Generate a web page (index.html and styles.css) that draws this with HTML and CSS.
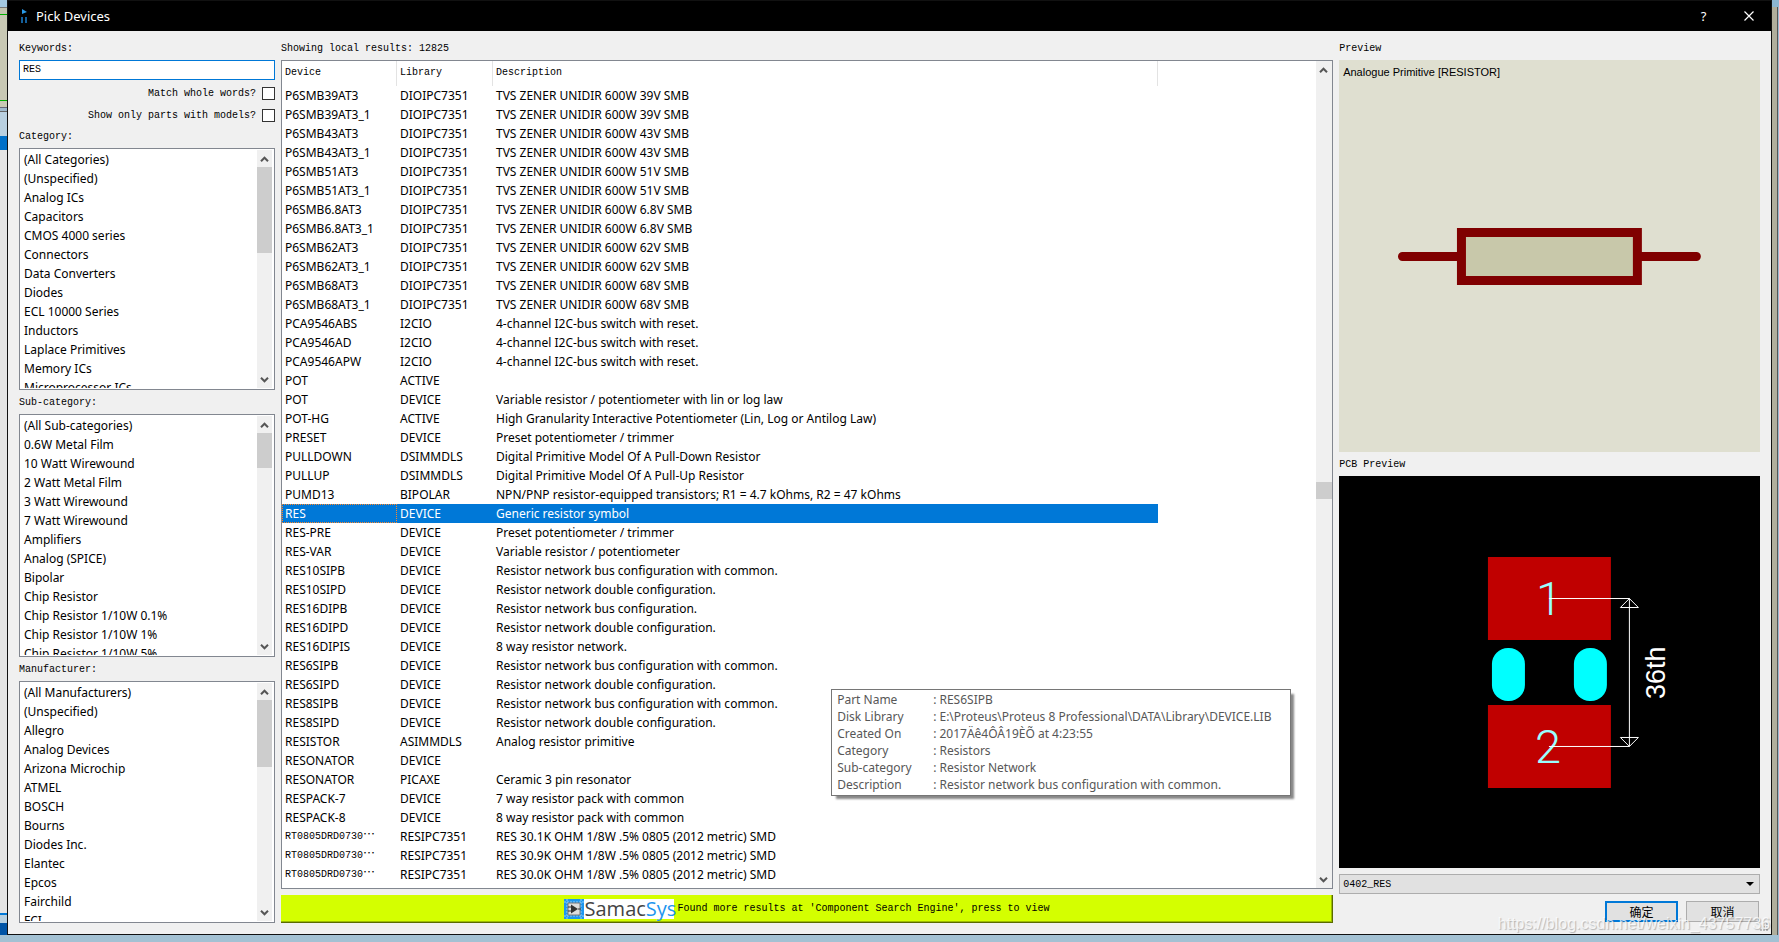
FILE: index.html
```html
<!DOCTYPE html>
<html lang="en">
<head>
<meta charset="utf-8">
<title>Pick Devices</title>
<link rel="stylesheet" href="styles.css">
</head>
<body>
<svg class="defs" aria-hidden="true">
  <symbol id="up" viewBox="0 0 9 6"><path d="M1 5.2 4.5 1.7 8 5.2" fill="none" stroke="#555" stroke-width="2"/></symbol>
  <symbol id="down" viewBox="0 0 9 6"><path d="M1 .8 4.5 4.3 8 .8" fill="none" stroke="#555" stroke-width="2"/></symbol>
</svg>
<div class="desktop">
  <div class="edge edge-left"></div>
  <main class="window">
    <header class="titlebar">
      <svg class="app-icon" viewBox="0 0 8 14"><path d="M2 0 7 3 2 5z" fill="#2a9be8"/><path d="M1 8h2v6H1zM5 8h2v6H5z" fill="#14609c"/></svg>
      <h1 class="title">Pick Devices</h1>
      <button class="title-btn" aria-label="Help">?</button>
      <button class="title-btn" aria-label="Close"><svg class="close-icon" viewBox="0 0 10 10"><path d="M.5.5l9 9M9.500.5l-9 9" stroke="#fff" stroke-width="1.2"/></svg></button>
    </header>
    <div class="content">
      <section class="filters">
        <label class="label" for="kw">Keywords:</label>
        <input class="keywords" id="kw" type="text" value="RES">
        <div class="checks">
          <label class="check">Match whole words?<input type="checkbox"></label>
          <label class="check">Show only parts with models?<input type="checkbox"></label>
        </div>
        <label class="label" for="cat">Category:</label>
        <div class="listbox">
          <select id="cat" size="12">
            <option>(All Categories)</option><option>(Unspecified)</option><option>Analog ICs</option><option>Capacitors</option><option>CMOS 4000 series</option><option>Connectors</option><option>Data Converters</option><option>Diodes</option><option>ECL 10000 Series</option><option>Inductors</option><option>Laplace Primitives</option><option>Memory ICs</option><option>Microprocessor ICs</option>
          </select>
          <div class="scroll"><svg class="arrow"><use href="#up"/></svg><div class="track"><div class="thumb" style="height:42%"></div></div><svg class="arrow"><use href="#down"/></svg></div>
        </div>
        <label class="label" for="sub">Sub-category:</label>
        <div class="listbox">
          <select id="sub" size="12">
            <option>(All Sub-categories)</option><option>0.6W Metal Film</option><option>10 Watt Wirewound</option><option>2 Watt Metal Film</option><option>3 Watt Wirewound</option><option>7 Watt Wirewound</option><option>Amplifiers</option><option>Analog (SPICE)</option><option>Bipolar</option><option>Chip Resistor</option><option>Chip Resistor 1/10W 0.1%</option><option>Chip Resistor 1/10W 1%</option><option>Chip Resistor 1/10W 5%</option>
          </select>
          <div class="scroll"><svg class="arrow"><use href="#up"/></svg><div class="track"><div class="thumb" style="height:17%"></div></div><svg class="arrow"><use href="#down"/></svg></div>
        </div>
        <label class="label" for="man">Manufacturer:</label>
        <div class="listbox">
          <select id="man" size="12">
            <option>(All Manufacturers)</option><option>(Unspecified)</option><option>Allegro</option><option>Analog Devices</option><option>Arizona Microchip</option><option>ATMEL</option><option>BOSCH</option><option>Bourns</option><option>Diodes Inc.</option><option>Elantec</option><option>Epcos</option><option>Fairchild</option><option>FCI</option>
          </select>
          <div class="scroll"><svg class="arrow"><use href="#up"/></svg><div class="track"><div class="thumb" style="height:33%"></div></div><svg class="arrow"><use href="#down"/></svg></div>
        </div>
      </section>

      <section class="results">
        <div class="label">Showing local results: 12825</div>
        <div class="listview">
          <div class="rows">
            <table>
              <colgroup><col class="c-device"><col class="c-library"><col class="c-desc"></colgroup>
              <thead><tr><th>Device</th><th>Library</th><th>Description</th></tr></thead>
              <tbody>
                <tr><td>P6SMB39AT3</td><td>DIOIPC7351</td><td>TVS ZENER UNIDIR 600W 39V SMB</td></tr>
                <tr><td>P6SMB39AT3_1</td><td>DIOIPC7351</td><td>TVS ZENER UNIDIR 600W 39V SMB</td></tr>
                <tr><td>P6SMB43AT3</td><td>DIOIPC7351</td><td>TVS ZENER UNIDIR 600W 43V SMB</td></tr>
                <tr><td>P6SMB43AT3_1</td><td>DIOIPC7351</td><td>TVS ZENER UNIDIR 600W 43V SMB</td></tr>
                <tr><td>P6SMB51AT3</td><td>DIOIPC7351</td><td>TVS ZENER UNIDIR 600W 51V SMB</td></tr>
                <tr><td>P6SMB51AT3_1</td><td>DIOIPC7351</td><td>TVS ZENER UNIDIR 600W 51V SMB</td></tr>
                <tr><td>P6SMB6.8AT3</td><td>DIOIPC7351</td><td>TVS ZENER UNIDIR 600W 6.8V SMB</td></tr>
                <tr><td>P6SMB6.8AT3_1</td><td>DIOIPC7351</td><td>TVS ZENER UNIDIR 600W 6.8V SMB</td></tr>
                <tr><td>P6SMB62AT3</td><td>DIOIPC7351</td><td>TVS ZENER UNIDIR 600W 62V SMB</td></tr>
                <tr><td>P6SMB62AT3_1</td><td>DIOIPC7351</td><td>TVS ZENER UNIDIR 600W 62V SMB</td></tr>
                <tr><td>P6SMB68AT3</td><td>DIOIPC7351</td><td>TVS ZENER UNIDIR 600W 68V SMB</td></tr>
                <tr><td>P6SMB68AT3_1</td><td>DIOIPC7351</td><td>TVS ZENER UNIDIR 600W 68V SMB</td></tr>
                <tr><td>PCA9546ABS</td><td>I2CIO</td><td>4-channel I2C-bus switch with reset.</td></tr>
                <tr><td>PCA9546AD</td><td>I2CIO</td><td>4-channel I2C-bus switch with reset.</td></tr>
                <tr><td>PCA9546APW</td><td>I2CIO</td><td>4-channel I2C-bus switch with reset.</td></tr>
                <tr><td>POT</td><td>ACTIVE</td><td></td></tr>
                <tr><td>POT</td><td>DEVICE</td><td>Variable resistor / potentiometer with lin or log law</td></tr>
                <tr><td>POT-HG</td><td>ACTIVE</td><td>High Granularity Interactive Potentiometer (Lin, Log or Antilog Law)</td></tr>
                <tr><td>PRESET</td><td>DEVICE</td><td>Preset potentiometer / trimmer</td></tr>
                <tr><td>PULLDOWN</td><td>DSIMMDLS</td><td>Digital Primitive Model Of A Pull-Down Resistor</td></tr>
                <tr><td>PULLUP</td><td>DSIMMDLS</td><td>Digital Primitive Model Of A Pull-Up Resistor</td></tr>
                <tr><td>PUMD13</td><td>BIPOLAR</td><td>NPN/PNP resistor-equipped transistors; R1 = 4.7 kOhms, R2 = 47 kOhms</td></tr>
                <tr class="selected"><td>RES</td><td>DEVICE</td><td>Generic resistor symbol</td></tr>
                <tr><td>RES-PRE</td><td>DEVICE</td><td>Preset potentiometer / trimmer</td></tr>
                <tr><td>RES-VAR</td><td>DEVICE</td><td>Variable resistor / potentiometer</td></tr>
                <tr><td>RES10SIPB</td><td>DEVICE</td><td>Resistor network bus configuration with common.</td></tr>
                <tr><td>RES10SIPD</td><td>DEVICE</td><td>Resistor network double configuration.</td></tr>
                <tr><td>RES16DIPB</td><td>DEVICE</td><td>Resistor network bus configuration.</td></tr>
                <tr><td>RES16DIPD</td><td>DEVICE</td><td>Resistor network double configuration.</td></tr>
                <tr><td>RES16DIPIS</td><td>DEVICE</td><td>8 way resistor network.</td></tr>
                <tr><td>RES6SIPB</td><td>DEVICE</td><td>Resistor network bus configuration with common.</td></tr>
                <tr><td>RES6SIPD</td><td>DEVICE</td><td>Resistor network double configuration.</td></tr>
                <tr><td>RES8SIPB</td><td>DEVICE</td><td>Resistor network bus configuration with common.</td></tr>
                <tr><td>RES8SIPD</td><td>DEVICE</td><td>Resistor network double configuration.</td></tr>
                <tr><td>RESISTOR</td><td>ASIMMDLS</td><td>Analog resistor primitive</td></tr>
                <tr><td>RESONATOR</td><td>DEVICE</td><td></td></tr>
                <tr><td>RESONATOR</td><td>PICAXE</td><td>Ceramic 3 pin resonator</td></tr>
                <tr><td>RESPACK-7</td><td>DEVICE</td><td>7 way resistor pack with common</td></tr>
                <tr><td>RESPACK-8</td><td>DEVICE</td><td>8 way resistor pack with common</td></tr>
                <tr><td class="mono">RT0805DRD0730<span class="more" lang="zh-CN">…</span></td><td>RESIPC7351</td><td>RES 30.1K OHM 1/8W .5% 0805 (2012 metric) SMD</td></tr>
                <tr><td class="mono">RT0805DRD0730<span class="more" lang="zh-CN">…</span></td><td>RESIPC7351</td><td>RES 30.9K OHM 1/8W .5% 0805 (2012 metric) SMD</td></tr>
                <tr><td class="mono">RT0805DRD0730<span class="more" lang="zh-CN">…</span></td><td>RESIPC7351</td><td>RES 30.0K OHM 1/8W .5% 0805 (2012 metric) SMD</td></tr>
              </tbody>
            </table>
          </div>
          <div class="scroll"><svg class="arrow"><use href="#up"/></svg><div class="track"><div class="before" style="height:51%"></div><div class="thumb thumb-min"></div></div><svg class="arrow"><use href="#down"/></svg></div>
          <dl class="tooltip" role="tooltip">
            <dt>Part Name</dt><dd>: RES6SIPB</dd>
            <dt>Disk Library</dt><dd>: E:\Proteus\Proteus 8 Professional\DATA\Library\DEVICE.LIB</dd>
            <dt>Created On</dt><dd>: 2017Äê4ÔÂ19ÈÕ at 4:23:55</dd>
            <dt>Category</dt><dd>: Resistors</dd>
            <dt>Sub-category</dt><dd>: Resistor Network</dd>
            <dt>Description</dt><dd>: Resistor network bus configuration with common.</dd>
          </dl>
        </div>
        <button class="search-more">
          <span class="brand">
            <svg class="brand-icon" viewBox="0 0 20 20"><path d="M0 0h20v20H0z" fill="#1e96ee"/><path d="M0 3h20M0 17h20M3 0v20M17 0v20" stroke="#8fcbf7" stroke-dasharray="2 1"/><path d="M4 4h12v12H4z" fill="#ddd" stroke="#777"/><path d="M7 5.500 14 10l-7 4.500z" fill="#333"/><path d="M4 8h3M4 12h3M14 10h3" stroke="#333"/></svg>
            <span class="brand-name">Samac<span class="brand-sys">Sys</span></span>
          </span>
          <span>Found more results at 'Component Search Engine', press to view</span>
        </button>
      </section>

      <section class="previews">
        <div class="label">Preview</div>
        <div class="schematic">
          <p class="model">Analogue Primitive [RESISTOR]</p>
          <svg class="drawing" viewBox="0 0 421 392" role="img" aria-label="Resistor symbol">
            <path d="M63.500 196.500H120M301 196.500h56.500" stroke="#800000" stroke-width="9" stroke-linecap="round"/>
            <path d="M118 168h185v57H118z" fill="#800000"/><path d="M127 177h167v39H127z" fill="#c8c8aa"/>
          </svg>
        </div>
        <div class="label">PCB Preview</div>
        <div class="board">
          <svg class="drawing" viewBox="0 0 421 392" role="img" aria-label="0402 footprint">
            <path d="M149 81h123v83H149zM149 229h123v83H149z" fill="#c00000"/>
            <rect x="153" y="172" width="33" height="53" rx="16" fill="#0ff"/><rect x="235" y="172" width="33" height="53" rx="16" fill="#0ff"/>
            <text class="pad-no" x="210" y="139">1</text><text class="pad-no" x="209" y="287">2</text>
            <path d="M210 122.500h80.500v148H210M281.500 131.500h18l-9-9zM281.500 261.500h18l-9 9z" fill="none" stroke="#fff"/>
            <text class="dim" transform="translate(326 223) rotate(-90)">36th</text>
          </svg>
        </div>
        <div class="package">
          <select aria-label="Package"><option>0402_RES</option></select>
          <svg class="caret" viewBox="0 0 8 4"><path d="M0 0h8L4 4z"/></svg>
        </div>
        <div class="actions"><button class="btn btn-ok">确定</button><button class="btn">取消</button></div>
      </section>
    </div>
    <svg class="grip" viewBox="0 0 9 9"><path d="M6 0h2v2H6zM3 3h2v2H3zM6 3h2v2H6zM0 6h2v2H0zM3 6h2v2H3zM6 6h2v2H6z" fill="#bbb"/></svg>
  </main>
  <div class="edge edge-right"></div>
</div>
<div class="watermark">https://blog.csdn.net/weixin_43757736</div>
</body>
</html>
```
FILE: styles.css
```css
* { box-sizing: border-box; }
body { margin: 0; height: 100vh; position: relative; overflow: hidden; background: linear-gradient(#8fadbf, #a3c1d3); font: 10px/20px "Liberation Mono", "Noto Sans CJK SC", monospace; color: #000; }
button, input, select { font: inherit; color: inherit; }
.defs { display: none; }
.desktop { display: flex; height: 100%; padding-bottom: 7px; }
.edge { width: 7px; }
.edge-left { background: linear-gradient(#a4c8e0 0 7px, #777 7px 8px, #c4c4b0 8px 14px, #00b000 14px 15px, #c8c8b4 15px 100px, #00b000 100px 101px, #c8c8b4 101px 107px, #667 107px 108px, #9fb9cc 108px 111px, #666 111px 112px, #b9d0e0 112px 136px, #0070c8 136px 150px, #e4e4e4 150px 913px, #0078d7 913px 915px, #b5cfe0 915px 923px, #0054a6 923px); }
.edge-right { background: linear-gradient(90deg, #b0ae9c 0 5px, #555 5px 6px, #9abad0 6px); border-top: 7px solid #8cb6d2; }
.window { flex: 1; min-width: 0; position: relative; display: flex; flex-direction: column; background: #f0f0f0; border: 1px solid #111; }
.titlebar { height: 30px; display: flex; align-items: center; background: #000; color: #fff; font-family: "Noto Sans", "Noto Sans CJK SC", sans-serif; padding-left: 12px; }
.app-icon { width: 8px; height: 14px; }
.title { flex: 1; margin: 0 0 0 8px; font-size: 13px; font-weight: 400; }
.title-btn { width: 45px; height: 30px; padding: 0; border: 0; background: none; font-size: 13px; }
.close-icon { width: 10px; height: 10px; }
.content { flex: 1; min-height: 0; display: grid; grid-template-columns: 256px minmax(0, 5fr) minmax(0, 2fr); gap: 6px; padding: 5px 11px 11px; }
.filters, .results, .previews { display: flex; flex-direction: column; min-height: 0; min-width: 0; }
.label { height: 24px; line-height: 26px; flex: none; }
.keywords { height: 20px; border: 1px solid #0078d7; background: #fff; padding: 0 3px; outline: 0; width: 100%; }
.checks { height: 44px; flex: none; display: flex; flex-direction: column; gap: 9px; padding-top: 7px; }
.check { height: 13px; display: flex; align-items: center; justify-content: flex-end; gap: 6px; }
.check input { appearance: none; width: 13px; height: 13px; margin: 0; border: 1px solid #333; background: #fff; }
.listbox { flex: 1; min-height: 0; display: flex; border: 1px solid #828790; background: #fff; padding: 1px 2px 1px 0; font: 12px/19px "Noto Sans", "Noto Sans CJK SC", sans-serif; }
.listbox select { flex: 1; min-width: 0; height: 100%; border: 0; border-radius: 0; padding: 1px 0 0; outline: 0; background: #fff; scrollbar-width: none; }
.listbox option { height: 19px; min-height: 19px; padding: 0 4px; line-height: 19px; }
.scroll { width: 15px; flex: none; display: flex; flex-direction: column; background: #f0f0f0; }
.arrow { width: 9px; height: 6px; margin: 6px 3px 5px; flex: none; }
.track { flex: 1; min-height: 0; }
.thumb { background: #cdcdcd; }
.thumb-min { height: 17px; }
.listview { flex: 1; min-height: 0; display: flex; position: relative; border: 1px solid #828790; background: #fff; }
.listview .scroll { width: 16px; }
.rows { flex: 1; min-width: 0; overflow: hidden; font: 12px/19px "Noto Sans", "Noto Sans CJK SC", sans-serif; }
table { border-collapse: separate; border-spacing: 0; table-layout: fixed; width: 876px; }
.c-device { width: 115px; }
.c-library { width: 96px; }
th { height: 25px; padding: 0 3px 2px; border-right: 1px solid #e3e3e3; text-align: left; font: 10px/20px "Liberation Mono", monospace; }
td { height: 19px; padding: 0 3px; white-space: nowrap; }
.mono { font-family: "Liberation Mono", monospace; font-size: 10px; }
.more { font: 12px/12px "Noto Sans CJK SC", sans-serif; }
.selected { background: #0078d7; color: #fff; }
.selected td:first-child { outline: 1px dotted #ff8728; outline-offset: -1px; }
.tooltip { position: absolute; right: 41px; bottom: 92px; min-width: 460px; margin: 0; display: grid; grid-template-columns: 96px auto; border: 1px solid #767676; background: #fff; color: #575757; padding: 1px 5px 2px; box-shadow: 4px 4px 2px -1px #888; font: 12px/17px "Noto Sans", "Noto Sans CJK SC", sans-serif; white-space: nowrap; }
.tooltip dd { margin: 0; }
.search-more { height: 28px; margin-top: 6px; flex: none; display: flex; align-items: center; justify-content: center; gap: 4px; padding: 0; border: 0; border-right: 1px solid #5a6b00; border-bottom: 1px solid #5a6b00; background: #d4ff00; box-shadow: inset -1px -1px #9cbc00; white-space: nowrap; }
.brand { display: flex; align-items: center; gap: 1px; height: 20px; width: 110px; background: #fff; }
.brand-icon { width: 20px; height: 20px; flex: none; }
.brand-name { font: 20px/20px "Open Sans", sans-serif; color: #444; }
.brand-sys { color: #1e96ee; }
.schematic { flex: 1; min-height: 0; position: relative; background: #dfdfd0; }
.board { flex: 1; min-height: 0; background: #000; }
.drawing { display: block; width: 100%; height: 100%; }
.model { position: absolute; top: 2px; left: 4px; margin: 0; font: 11px/20px "Liberation Sans", sans-serif; }
.pad-no { font: 300 47px Roboto, sans-serif; fill: #9ff; text-anchor: middle; }
.dim { font: 27px "Liberation Sans", sans-serif; fill: #fff; }
.package { position: relative; height: 20px; margin-top: 6px; flex: none; }
.package select { appearance: none; display: block; width: 100%; height: 100%; border: 1px solid #adadad; border-radius: 0; background: #e1e1e1; padding: 0 3px; }
.caret { position: absolute; right: 6px; top: 8px; width: 8px; height: 4px; pointer-events: none; }
.actions { display: flex; justify-content: flex-end; gap: 8px; padding: 7px 1px 1px; flex: none; }
.btn { width: 73px; height: 21px; padding: 0; border: 1px solid #adadad; background: #e1e1e1; font: 12px/17px "Noto Sans CJK SC", sans-serif; }
.btn-ok { border: 2px solid #0078d7; }
.grip { position: absolute; right: 2px; bottom: 2px; width: 9px; height: 9px; }
.watermark { position: absolute; right: 9px; bottom: 8px; font: 16px/20px "Liberation Sans", sans-serif; color: rgba(255, 255, 255, .75); text-shadow: 1px 1px 1px rgba(0, 0, 0, .25); pointer-events: none; }
```
